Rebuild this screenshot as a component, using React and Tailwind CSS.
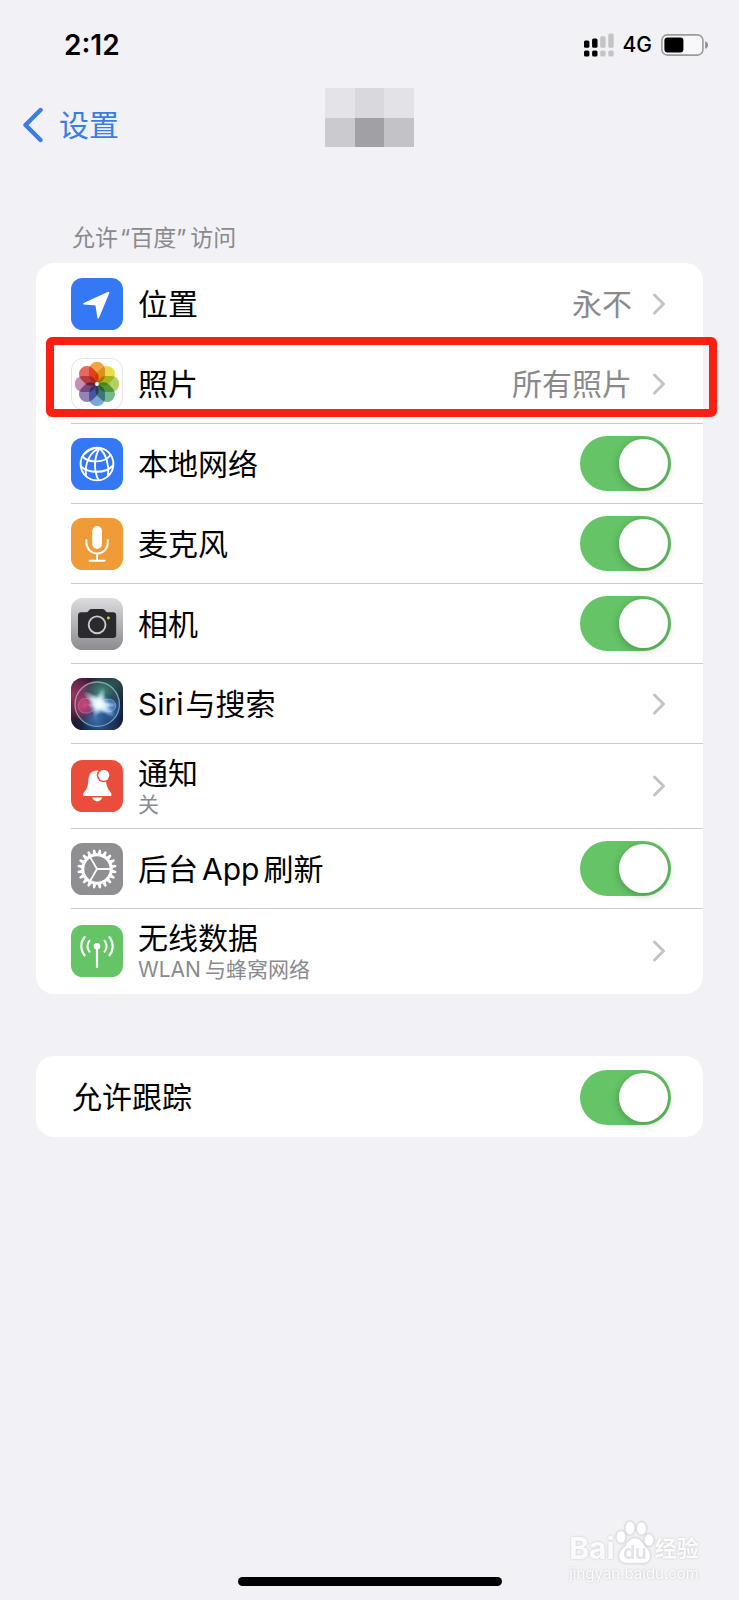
import React from "react";

const FONT = "font-['Inter','Noto_Sans_CJK_SC',sans-serif]";

function Tile({ children, fill, id }) {
  return (
    <svg viewBox="0 0 52 52" className="h-13 w-13 shrink-0" aria-hidden="true">
      <defs>
        <clipPath id={"tile-" + id}>
          <rect width="52" height="52" rx="11.5" />
        </clipPath>
      </defs>
      <g clipPath={"url(#tile-" + id + ")"}>
        <rect width="52" height="52" fill={fill} />
        {children}
      </g>
    </svg>
  );
}

function LocationIcon() {
  return (
    <Tile id="location" fill="#3478f6">
      <path
        d="M37.6 14.6 L12.9 25.7 L25.2 26.8 L27.2 39.8 Z"
        fill="#fff"
        stroke="#fff"
        strokeWidth="1.6"
        strokeLinejoin="round"
      />
    </Tile>
  );
}

const PETALS = ["#f5a544", "#e9dd4a", "#b3d062", "#74b98c", "#7ba7da", "#9482ba", "#c88eb2", "#e8685c"];

function PhotosIcon() {
  return (
    <Tile id="photos" fill="#fff">
      <rect x="0.5" y="0.5" width="51" height="51" rx="11" fill="none" stroke="#e3e3e6" />
      {PETALS.map((color, i) => (
        <rect
          key={color}
          x="18"
          y="3.8"
          width="16"
          height="21.4"
          rx="8"
          fill={color}
          transform={"rotate(" + i * 45 + " 26 26)"}
          style={{ mixBlendMode: "multiply" }}
        />
      ))}
      <circle cx="26" cy="26" r="1.9" fill="#fff" />
    </Tile>
  );
}

function NetworkIcon() {
  return (
    <Tile id="network" fill="#3478f6">
      <g fill="none" stroke="#fff" strokeWidth="1.9" strokeLinecap="round">
        <circle cx="26" cy="26" r="16.4" />
        <path d="M28.5 10.2 C19 14 13.5 25 15 37.5" />
        <path d="M28.5 10.2 C23.500 18 22 32 27.5 42" />
        <path d="M28.5 10.2 C35 16 38.500 27 37 37.500" />
        <path d="M28.5 10.2 C23 9.600 17 12.500 13.500 16" />
        <path d="M11.500 18.500 C18 25.500 34 25 39.500 17" />
        <path d="M10 28.500 C17 35 34 36.500 42 27.500" />
      </g>
    </Tile>
  );
}

function MicIcon() {
  return (
    <Tile id="mic" fill="#ef9c38">
      <rect x="21.2" y="8" width="9.8" height="23" rx="4.9" fill="#fff" />
      <path
        d="M15.4 22 V24.8 A10.7 10.7 0 0 0 36.8 24.8 V22 M26.1 35.6 V42.6 M18.6 42.7 H33.8"
        fill="none"
        stroke="#fff"
        strokeWidth="1.9"
        strokeLinecap="round"
      />
    </Tile>
  );
}

function CameraIcon() {
  return (
    <Tile id="camera" fill="url(#camera-bg)">
      <defs>
        <linearGradient id="camera-bg" x1="0" y1="0" x2="0" y2="1">
          <stop offset="0" stopColor="#dcdce0" />
          <stop offset="1" stopColor="#8c8c90" />
        </linearGradient>
      </defs>
      <path
        d="M10 14.2 H15.5 C17.6 14.2 18 11 20.2 11 H31.8 C34 11 34.4 14.2 36.5 14.2 H42 A3.2 3.2 0 0 1 45.2 17.4 V36.8 A3.2 3.2 0 0 1 42 40 H10.2 A3.2 3.2 0 0 1 7 36.8 V17.4 A3.2 3.2 0 0 1 10 14.2 Z"
        fill="#2a2a2c"
      />
      <circle cx="26.1" cy="26.8" r="8.4" fill="none" stroke="#c9c9cc" strokeWidth="1.9" />
      <circle cx="37.4" cy="20" r="1.4" fill="#f2c94f" />
    </Tile>
  );
}

function SiriIcon() {
  return (
    <Tile id="siri" fill="#1a1a30">
      <defs>
        <radialGradient id="siri-pink">
          <stop offset="0" stopColor="#d8447c" />
          <stop offset="0.55" stopColor="#a82a5c" stopOpacity="0.7" />
          <stop offset="1" stopColor="#5b1038" stopOpacity="0" />
        </radialGradient>
        <radialGradient id="siri-teal">
          <stop offset="0" stopColor="#4c9f88" />
          <stop offset="0.55" stopColor="#2a6a63" stopOpacity="0.7" />
          <stop offset="1" stopColor="#123a3b" stopOpacity="0" />
        </radialGradient>
        <radialGradient id="siri-blue">
          <stop offset="0" stopColor="#3f86cf" />
          <stop offset="0.55" stopColor="#285a9f" stopOpacity="0.7" />
          <stop offset="1" stopColor="#12295c" stopOpacity="0" />
        </radialGradient>
        <radialGradient id="siri-glow">
          <stop offset="0" stopColor="#fff" />
          <stop offset="0.4" stopColor="#e6f6ff" stopOpacity="0.8" />
          <stop offset="1" stopColor="#bfe6ff" stopOpacity="0" />
        </radialGradient>
        <linearGradient id="siri-ring" x1="0" y1="0" x2="1" y2="1">
          <stop offset="0" stopColor="#e58aae" />
          <stop offset="0.5" stopColor="#78c4ae" />
          <stop offset="1" stopColor="#6ab0d8" />
        </linearGradient>
      </defs>
      <circle cx="2" cy="18" r="30" fill="url(#siri-pink)" opacity="0.7" />
      <circle cx="42" cy="6" r="26" fill="url(#siri-teal)" opacity="0.45" />
      <circle cx="30" cy="50" r="26" fill="url(#siri-blue)" opacity="0.5" />
      <circle cx="26.2" cy="26.2" r="22" fill="#6c6f94" opacity="0.35" />
      <circle cx="14" cy="27" r="16" fill="url(#siri-pink)" opacity="0.85" />
      <circle cx="30" cy="14" r="18" fill="url(#siri-teal)" opacity="0.85" />
      <circle cx="38" cy="32" r="16" fill="url(#siri-blue)" opacity="0.8" />
      <circle cx="25" cy="40" r="16" fill="url(#siri-blue)" opacity="0.7" />
      <path
        d="M28 27 C20 17 7 19 7.500 28.500 C8 38 21 37 28 27"
        fill="#e0608e"
        fillOpacity="0.25"
        stroke="#f29abb"
        strokeOpacity="0.6"
        strokeWidth="0.7"
      />
      <path
        d="M28 27 C34 18 44 20 45 27.500 C44 36 33 36 28 27"
        fill="#6aaef0"
        fillOpacity="0.45"
        stroke="#9bd4ff"
        strokeOpacity="0.6"
        strokeWidth="0.7"
      />
      <ellipse cx="28" cy="26" rx="20" ry="5.500" fill="url(#siri-glow)" transform="rotate(38 28 26)" />
      <ellipse cx="28" cy="25" rx="16" ry="5" fill="url(#siri-glow)" transform="rotate(-72 28 25)" opacity="0.8" />
      <ellipse cx="31" cy="27" rx="15" ry="3.500" fill="url(#siri-glow)" opacity="0.8" />
      <circle cx="28" cy="26" r="11" fill="url(#siri-glow)" />
      <circle cx="26.2" cy="26.2" r="22.2" fill="none" stroke="url(#siri-ring)" strokeWidth="1.3" opacity="0.85" />
    </Tile>
  );
}

function BellIcon() {
  return (
    <Tile id="bell" fill="#eb4d3d">
      <path
        d="M26 10.4 C21.4 10.4 18.2 13.5 17.6 18 C16.9 24.2 17.2 27.4 13.6 31.4 C12.4 32.8 12 33.4 12 34.4 C12 35.4 12.7 36 13.8 36 H38.8 C39.9 36 40.5 35.4 40.5 34.4 C40.5 33.4 40 32.8 38.9 31.4 C35.6 27.4 35.4 24.2 34.6 18 C34 13.5 30.6 10.4 26 10.4 Z"
        fill="#fff"
      />
      <path d="M21.2 37.6 H31.2 C30.6 40 28.8 41.4 26.2 41.4 C23.6 41.4 21.8 40 21.2 37.6 Z" fill="#fff" />
      <circle cx="32.8" cy="15.3" r="7" fill="#eb4d3d" />
      <circle cx="32.8" cy="15.3" r="5.5" fill="#fff" />
    </Tile>
  );
}

const TEETH = Array.from({ length: 20 }, (_, i) => i * 18);

function GearIcon() {
  return (
    <Tile id="gear" fill="#8e8e93">
      {TEETH.map((angle) => (
        <path
          key={angle}
          d="M24.1 11 L25 6.6 Q26 6 27 6.6 L27.9 11 Z"
          fill="#fff"
          transform={"rotate(" + (angle + 9) + " 26 26)"}
        />
      ))}
      <circle cx="26" cy="26" r="14.2" fill="none" stroke="#fff" strokeWidth="3" />
      <path d="M26 26 H39 M26 26 L19.4 14.6 M26 26 L19.4 37.4" stroke="#fff" strokeWidth="1.8" fill="none" />
    </Tile>
  );
}

function AntennaIcon() {
  return (
    <Tile id="antenna" fill="#65c466">
      <circle cx="26" cy="21.2" r="3.3" fill="#fff" />
      <g fill="none" stroke="#fff" strokeWidth="2.2" strokeLinecap="round">
        <path d="M26 22 V42" />
        <path d="M18.400 15.8 A8.8 8.8 0 0 0 18.400 26.6 M33.600 15.8 A8.8 8.8 0 0 1 33.600 26.6" />
        <path d="M13.600 12 A14.500 14.500 0 0 0 13.600 30.4 M38.400 12 A14.500 14.500 0 0 1 38.400 30.4" />
      </g>
    </Tile>
  );
}

function Chevron() {
  return (
    <svg viewBox="0 0 14 24" className="h-6 w-3.5 shrink-0" aria-hidden="true">
      <path
        d="M2.5 3 L11.5 12 L2.5 21"
        fill="none"
        stroke="#c4c4c6"
        strokeWidth="3"
        strokeLinecap="round"
        strokeLinejoin="round"
      />
    </svg>
  );
}

function Toggle({ id }) {
  return (
    <input
      id={id}
      type="checkbox"
      role="switch"
      defaultChecked
      className="flex h-[55px] w-[91px] shrink-0 cursor-pointer appearance-none items-center rounded-full bg-gray-200 p-[3px] before:h-[49px] before:w-[49px] before:rounded-full before:bg-white before:shadow-[0_2px_8px_rgba(0,0,0,0.25)] checked:justify-end checked:bg-[#65c466]"
    />
  );
}

const ROWS = [
  { id: "location", icon: LocationIcon, title: "位置", value: "永不" },
  { id: "photos", icon: PhotosIcon, title: "照片", value: "所有照片", marked: true },
  { id: "network", icon: NetworkIcon, title: "本地网络", toggle: true },
  { id: "mic", icon: MicIcon, title: "麦克风", toggle: true },
  { id: "camera", icon: CameraIcon, title: "相机", toggle: true },
  { id: "siri", icon: SiriIcon, title: <><span className="mr-0.5">Siri</span>与搜索</> },
  { id: "notify", icon: BellIcon, title: "通知", note: "关" },
  { id: "refresh", icon: GearIcon, title: <>后台<span className="mx-1">App</span>刷新</>, toggle: true },
  {
    id: "data",
    icon: AntennaIcon,
    title: "无线数据",
    note: <><span className="mr-1">WLAN</span>与蜂窝网络</>,
  },
];

function RowText({ title, note }) {
  return (
    <span className={note ? "flex flex-1 flex-col pt-1.5" : "flex flex-1 flex-col"}>
      <span className="text-[30px] leading-8">{title}</span>
      {note && <span className="text-[21px] leading-8 text-[#8a8a8e]">{note}</span>}
    </span>
  );
}

function Row({ row }) {
  const Icon = row.icon;
  const height = row.note ? "h-[85px]" : "h-20";
  const body = "flex items-center gap-[15px] border-b border-[#cbcbcd] group-last:border-transparent";
  return (
    <li className="group relative pl-[35px]">
      {row.toggle ? (
        <label htmlFor={row.id} className={body + " " + height + " pr-8"}>
          <Icon />
          <RowText title={row.title} />
          <Toggle id={row.id} />
        </label>
      ) : (
        <a href={"#" + row.id} className={body + " " + height + " pr-[37px]"}>
          <Icon />
          <RowText title={row.title} note={row.note} />
          <span className="flex items-center gap-5">
            {row.value && <span className="text-[30px] leading-8 text-[#8a8a8e]">{row.value}</span>}
            <Chevron />
          </span>
        </a>
      )}
      {row.marked && (
        <span className="pointer-events-none absolute -top-[7px] -right-3.5 bottom-[7px] left-2.5 rounded-md border-8 border-[#fb1f13]" />
      )}
    </li>
  );
}

function StatusBar() {
  return (
    <div className="flex h-22 items-center justify-between pt-0.5 pr-[30px] pl-16">
      <span className="text-[28px] leading-8 font-semibold">2:12</span>
      <span className="flex items-center gap-[9px]">
        <svg viewBox="0 0 30 24" className="h-6 w-[30px]" aria-hidden="true">
          <rect x="0" y="7.5" width="5.4" height="7.2" rx="1.5" />
          <rect x="8.1" y="5.6" width="5.4" height="9.1" rx="1.5" />
          <rect x="16.2" y="3.2" width="5.4" height="11.5" rx="1.5" fill="#c4c4c7" />
          <rect x="24.3" y="0.4" width="5.4" height="14.3" rx="1.5" fill="#c4c4c7" />
          <rect x="0" y="17.4" width="5.4" height="6.2" rx="1.5" />
          <rect x="8.1" y="17.4" width="5.4" height="6.2" rx="1.5" />
          <rect x="16.2" y="17.4" width="5.4" height="6.2" rx="1.5" fill="#c4c4c7" />
          <rect x="24.3" y="17.4" width="5.4" height="6.2" rx="1.5" fill="#c4c4c7" />
        </svg>
        <span className="text-[21px] leading-6 font-medium">4G</span>
        <svg viewBox="0 0 48 22" className="h-[22px] w-12" aria-hidden="true">
          <rect x="0.9" y="0.9" width="41" height="20.2" rx="5.4" fill="#f8f8fa" stroke="#9b9b9f" strokeWidth="1.6" />
          <rect x="3.4" y="3.4" width="19" height="15.2" rx="3" />
          <path d="M44.2 7.2 C48 8.6 48 13.4 44.2 14.8 Z" fill="#8d8d91" />
        </svg>
      </span>
    </div>
  );
}

function Watermark() {
  return (
    <div className="pointer-events-none absolute right-10 bottom-4 flex flex-col text-white/90 drop-shadow-[0_0_1px_rgba(0,0,0,0.2)]">
      <div className="flex items-end">
        <span className="text-[30px] leading-8 font-bold">Bai</span>
        <svg viewBox="0 0 40 44" className="h-11 w-10" aria-hidden="true">
          <g fill="#fff" stroke="#e0e0e5" strokeWidth="0.8">
            <ellipse cx="6" cy="17" rx="4.8" ry="6.2" />
            <ellipse cx="15" cy="8" rx="4.8" ry="6.8" />
            <ellipse cx="26.5" cy="8.5" rx="4.8" ry="6.5" />
            <ellipse cx="34" cy="20" rx="4.8" ry="6" />
            <path d="M20 18 C25 18 27 22 30 26 C34 30 36 33 35 38 C34 43 29 44 20 43 C11 44 5 43 4 38 C3 33 6 30 10 26 C13 22 15 18 20 18 Z" />
          </g>
          <text x="20" y="39" textAnchor="middle" fontSize="19" fontWeight="600" fill="#e2e2e7">
            du
          </text>
        </svg>
        <span className="text-[22px] leading-8 font-bold">经验</span>
      </div>
      <span className="text-[15px] leading-5">jingyan.baidu.com</span>
    </div>
  );
}

export default function App() {
  return (
    <div lang="zh-CN" className={FONT + " relative flex min-h-screen flex-col bg-[#f1f1f6] text-black"}>
      <StatusBar />
      <header className="grid h-[74px] grid-cols-[1fr_auto_1fr] items-start">
        <a href="#settings" className="flex h-[74px] items-center gap-4 pl-[23px] text-[#3b7de8]">
          <svg viewBox="0 0 20 36" className="h-9 w-5" aria-hidden="true">
            <path
              d="M17.5 3 L2.5 18 L17.5 33"
              fill="none"
              stroke="currentColor"
              strokeWidth="4.4"
              strokeLinecap="round"
              strokeLinejoin="round"
            />
          </svg>
          <span className="text-[30px] leading-8">设置</span>
        </a>
        <div className="grid h-[59px] w-[89px] grid-cols-3 grid-rows-2" aria-hidden="true">
          <span className="bg-[#e4e3e8]" />
          <span className="bg-[#d9d8dd]" />
          <span className="bg-[#e3e2e7]" />
          <span className="bg-[#cacacf]" />
          <span className="bg-[#a0a0a5]" />
          <span className="bg-[#c2c2c7]" />
        </div>
      </header>
      <main className="px-9 pt-15">
        <h2 className="px-9 text-[23px] leading-8 font-normal text-[#8a8a8e]">
          允许<span className="mx-0.5">“百度”</span>
          <span className="ml-0.5">访问</span>
        </h2>
        <ul className="mt-[9px] rounded-[18px] bg-white pt-px">
          {ROWS.map((row) => (
            <Row key={row.id} row={row} />
          ))}
        </ul>
        <div className="mt-[62px] rounded-[18px] bg-white pt-px">
          <label htmlFor="tracking" className="flex h-20 items-center pr-8 pl-9">
            <RowText title="允许跟踪" />
            <Toggle id="tracking" />
          </label>
        </div>
      </main>
      <footer className="mt-auto flex justify-center pb-3.5">
        <div className="h-[9px] w-66 rounded-full bg-black" />
      </footer>
      <Watermark />
    </div>
  );
}
